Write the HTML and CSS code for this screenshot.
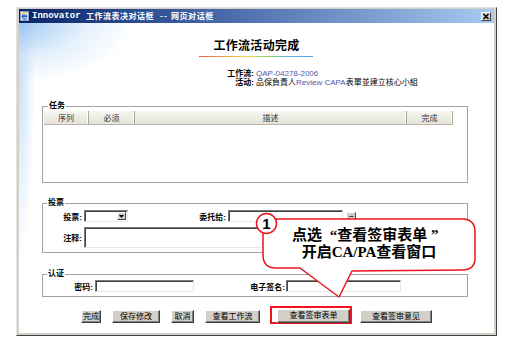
FILE: index.html
```html
<!DOCTYPE html>
<html lang="zh-CN">
<head>
<meta charset="utf-8">
<title>Innovator 工作流表决对话框</title>
<link rel="stylesheet" href="styles.css">
</head>
<body>
<div class="window">
  <div class="titlebar">
    <svg class="ticon" viewBox="0 0 9 10" width="9" height="10">
      <rect x="0.5" y="0.5" width="8" height="9" fill="#f4f4f4" stroke="#8aa0c0"/>
      <path d="M2 6.2 C2 3.2 6.8 3 6.8 5.6 L2.6 5.6 M2.4 6.6 C3 8.4 5.6 8.4 6.6 7.2" fill="none" stroke="#1e64d0" stroke-width="1.3"/>
      <path d="M1 3.5 C3 1.2 7 1 8.4 2" fill="none" stroke="#f0a020" stroke-width="0.9"/>
    </svg>
    <span class="ttext"><span class="mono">Innovator</span><span class="tseg t1">工作流表决对话框</span><span class="tseg t2">--</span><span class="tseg t3">网页对话框</span></span>
    <span class="close">
      <svg viewBox="0 0 8 7" width="8" height="7"><path d="M1.5 1 L6.5 6 M6.5 1 L1.5 6" stroke="#000" stroke-width="1.5"/></svg>
    </span>
  </div>
  <div class="content">
    <h1 class="heading">工作流活动完成</h1>
    <div class="rainbow"></div>
    <div class="info">
      <span class="lbl">工作流:</span><span class="val link">QAP-04278-2006</span>
      <span class="lbl">活动:</span><span class="val">品保負責人<span class="link">Review CAPA</span>表單並建立核心小組</span>
    </div>

    <fieldset class="group tasks">
      <legend>任务</legend>
      <div class="thead">
        <div class="th c1">序列</div>
        <div class="th c2">必须</div>
        <div class="th c3">描述</div>
        <div class="th c4">完成</div>
      </div>
      <div class="tbody"></div>
    </fieldset>

    <fieldset class="group vote">
      <legend>投票</legend>
      <div class="row">
        <label class="flbl w39">投票:</label>
        <div class="select"><span class="sbtn"><svg viewBox="0 0 5 3" width="5" height="3"><path d="M0 0 H5 L2.5 3 Z" fill="#000"/></svg></span></div>
        <label class="flbl w98">委托给:</label>
        <div class="input w115"></div>
        <div class="dots">...</div>
      </div>
      <div class="row row2">
        <label class="flbl w39">注释:</label>
        <div class="textarea"></div>
      </div>
    </fieldset>

    <fieldset class="group auth">
      <legend>认证</legend>
      <div class="row">
        <label class="flbl w50">密码:</label>
        <div class="input w99"></div>
        <label class="flbl w91">电子签名:</label>
        <div class="input w115 ml1"></div>
      </div>
    </fieldset>

    <div class="buttons">
      <button class="btn bw20">完成</button>
      <button class="btn bw48">保存修改</button>
      <button class="btn bw23">取消</button>
      <button class="btn bw55">查看工作流</button>
      <div class="hilite"><button class="btn bw73">查看签审表单</button></div>
      <button class="btn bw72 after-hi">查看签审意见</button>
    </div>
  </div>
</div>

<div class="callout">
  <svg class="bubble" viewBox="0 0 225 92" width="225" height="92">
    <path d="M21 9 L207 9 Q220 9 220 22 L220 48 Q220 60 207 60 L97 61 L84 87 L45 58 L21 58 Q8 58 8 45 L8 22 Q8 9 21 9 Z" fill="#fff" stroke="#e8161b" stroke-width="1.5" stroke-linejoin="round"/>
    <circle cx="11.5" cy="13.5" r="10" fill="#fff" stroke="#e8161b" stroke-width="1.5"/>
    <text x="11.5" y="19" text-anchor="middle" class="num">1</text>
  </svg>
  <div class="callout-text">
    <div>点选<span class="qo">“</span>查看签审表单 <span class="qc">”</span></div>
    <div>开启CA/PA查看窗口</div>
  </div>
</div>
</body>
</html>
```

FILE: styles.css
```css
* { box-sizing: border-box; }

body {
  margin: 0;
  width: 515px;
  height: 349px;
  background: #fff;
  position: relative;
  overflow: hidden;
  font-family: "Liberation Sans", "Noto Sans CJK SC", sans-serif;
  font-size: 8px;
  color: #000;
}

.window {
  margin: 7px 0 0 16px;
  width: 481px;
  height: 329px;
  background: #d4d0c8;
  border: 1px solid;
  border-color: #e4e2dc #404040 #404040 #e4e2dc;
  padding: 1px 2px 2px 2px;
  display: flex;
  flex-direction: column;
}

.titlebar {
  flex: none;
  height: 14px;
  display: flex;
  align-items: center;
  padding-left: 1px;
  background: linear-gradient(to right, #0a246a 0%, #3b5ca0 35%, #a6caf0 100%);
  color: #fff;
}

.ticon { flex: none; margin-right: 3px; }

.ttext {
  display: flex;
  align-items: center;
  font-family: "Noto Sans CJK SC", sans-serif;
  font-weight: bold;
  font-size: 8px;
  line-height: 12px;
  white-space: nowrap;
}

.mono {
  font-family: "Liberation Mono", monospace;
  font-size: 9px;
  width: 50px;
}

.t1 { margin-left: 4px; letter-spacing: 0.5px; }
.t2 { margin-left: 6px; letter-spacing: 1px; }
.t3 { margin-left: 3px; letter-spacing: 0.6px; }

.close {
  margin-left: auto;
  margin-right: 3px;
  width: 10px;
  height: 9px;
  background: #d4d0c8;
  border: 1px solid;
  border-color: #fff #404040 #404040 #fff;
  display: flex;
  align-items: center;
  justify-content: center;
}

.content {
  flex: 1;
  position: relative;
  background:
    radial-gradient(ellipse 115px 60px at 0 0, rgba(150, 195, 240, 0.9), rgba(200, 225, 248, 0.5) 55%, rgba(255, 255, 255, 0) 100%),
    radial-gradient(ellipse 16px 200px at 0 40px, rgba(185, 215, 245, 0.8), rgba(255, 255, 255, 0) 100%),
    #fff;
}

.heading {
  margin: 14px 0 0;
  font-size: 12px;
  line-height: 15px;
  font-weight: bold;
  text-align: center;
  letter-spacing: 0.3px;
  font-family: "Noto Sans CJK SC", sans-serif;
}

.rainbow {
  width: 114px;
  height: 1px;
  margin: 4px 0 0 180px;
  background: linear-gradient(to right, #f05a4a 0%, #f0a040 22%, #e8e048 42%, #8cd060 60%, #58b4e8 80%, #5aa0f0 100%);
}

.info {
  margin-top: 12px;
  display: grid;
  grid-template-columns: 235px auto;
  column-gap: 2px;
  line-height: 9px;
}

.lbl { text-align: right; font-weight: bold; }
.link { color: #4a5ab0; }

.group {
  margin: 0 0 0 23px;
  width: 426px;
  padding: 0;
  border: 1px solid #a3a3a3;
}

.group legend {
  margin-left: 4px;
  padding: 0 1px;
  font-weight: bold;
  line-height: 8px;
  height: 8px;
}

.tasks { margin-top: 15px; padding: 1px 14px 0 1px; }

.thead {
  display: flex;
  height: 14px;
  background: linear-gradient(#f7f6f1, #e5e3d8);
  border-bottom: 1px solid #b8b6aa;
  color: #333;
}

.th {
  display: flex;
  align-items: center;
  justify-content: center;
  border-right: 1px solid #a8a69a;
  box-shadow: inset -1px 0 0 #fff;
}

.c1 { width: 45px; }
.c2 { width: 46px; }
.c3 { width: 272px; }
.c4 { width: 46px; }

.tbody { height: 57px; }

.vote { margin-top: 16px; padding: 3px 0 4px 0; }
.auth { margin-top: 17px; padding: 2px 0 4px 0; }

.row { display: flex; align-items: center; }
.row2 { margin-top: 5px; }

.flbl {
  flex: none;
  text-align: right;
  font-weight: bold;
  margin-right: 2px;
}

.w39 { width: 39px; }
.w98 { width: 98px; }
.w50 { width: 50px; }
.w91 { width: 91px; margin-right: 1px; }

.input, .select, .textarea {
  background: #fff;
  border: 1px solid;
  border-color: #7a7a7a #e8e8e8 #e8e8e8 #7a7a7a;
  box-shadow: inset 1px 1px 0 #404040;
  height: 12px;
}

.w115 { width: 115px; }
.w99 { width: 99px; }

.select {
  width: 44px;
  display: flex;
  justify-content: flex-end;
  padding: 1px 1px 1px 0;
}

.sbtn {
  width: 9px;
  height: 8px;
  background: #d4d0c8;
  border: 1px solid;
  border-color: #fff #404040 #404040 #fff;
  display: flex;
  align-items: center;
  justify-content: center;
}

.textarea { width: 272px; height: 21px; }

.dots {
  margin-left: 3px;
  width: 10px;
  height: 8px;
  background: #d4d0c8;
  border: 1px solid;
  border-color: #fff #404040 #404040 #fff;
  font-family: "Liberation Sans", sans-serif;
  font-weight: bold;
  font-size: 7px;
  line-height: 3px;
  text-align: center;
  letter-spacing: -0.5px;
  color: #000;
}

.buttons {
  display: flex;
  align-items: flex-start;
  gap: 11px;
  margin-top: 9px;
  padding-left: 62px;
}

.btn {
  margin: 4px 0 0;
  height: 13px;
  padding: 0;
  background: #d4d0c8;
  border: 1px solid;
  border-color: #fff #404040 #404040 #fff;
  box-shadow: inset -1px -1px 0 #808080;
  font-family: "Liberation Sans", "Noto Sans CJK SC", sans-serif;
  font-size: 8px;
  line-height: 10px;
  color: #000;
}

.bw20 { width: 20px; }
.bw48 { width: 48px; }
.bw23 { width: 23px; }
.bw55 { width: 55px; }
.bw73 { width: 73px; height: 14px; margin: 0; }
.bw72 { width: 72px; }

.hilite {
  margin-left: -1px;
  border: 2px solid #f0141e;
  padding: 1px 0 0 5px;
  height: 18px;
}

.after-hi { margin-left: -3px; }

.callout {
  position: absolute;
  left: 255px;
  top: 210px;
  width: 225px;
  height: 92px;
}

.bubble { position: absolute; left: 0; top: 0; }

.num {
  font-family: "Liberation Sans", sans-serif;
  font-weight: bold;
  font-size: 15px;
  fill: #000;
}

.callout-text {
  position: relative;
  margin-left: 8px;
  padding-top: 17px;
  width: 212px;
  text-align: center;
  font-family: "Liberation Serif", "Noto Sans CJK SC", serif;
  font-weight: bold;
  font-size: 15px;
  line-height: 17px;
  color: #000;
}

.qo, .qc {
  display: inline-block;
  width: 15px;
}

.qo { text-align: right; }
.qc { text-align: left; }
```
